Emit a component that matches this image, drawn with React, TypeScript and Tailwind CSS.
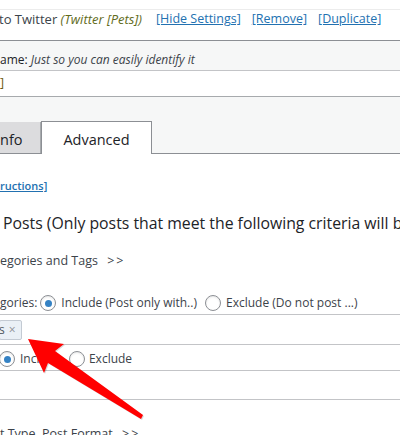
import React from "react";

function Radio({ checked = false, className = "" }: { checked?: boolean; className?: string }) {
  return (
    <span
      className={
        "flex h-4 w-4 shrink-0 items-center justify-center rounded-full border border-[#8c8f94] bg-white shadow-[inset_0_1px_2px_rgba(0,0,0,0.1)] " +
        className
      }
    >
      {checked ? <span className="h-[7px] w-[7px] rounded-full bg-[#3582c4]" /> : null}
    </span>
  );
}

function Arrow() {
  return (
    <svg
      className="pointer-events-none absolute left-0 top-0"
      width="400"
      height="435"
      viewBox="0 0 400 435"
    >
      <polygon
        points="28,339 64,344 55,351 143,415 141,419 48,363 44,373"
        fill="#000"
        opacity="0.15"
        transform="translate(1,1)"
      />
      <polygon points="28,339 64,344 55,351 143,415 141,419 48,363 44,373" fill="#ff0000" />
    </svg>
  );
}

export default function App() {
  return (
    <div className="relative h-[435px] w-[400px] overflow-hidden bg-white font-['Open_Sans',sans-serif] text-[#3c434a]">
      <div className="h-[10px] border-b border-[#ececec]" />

      {/* title row */}
      <div className="flex h-[31px] items-start border-b border-[#8c8f94] text-[13px] leading-[18px]">
        <span className="-ml-[1px] whitespace-nowrap">
          to Twitter <i className="text-[#626b1c]">(Twitter [Pets])</i>
        </span>
        <a className="ml-[14px] whitespace-nowrap text-[12.5px] text-[#2271b1] underline">[Hide Settings]</a>
        <a className="ml-[11px] whitespace-nowrap text-[12.5px] text-[#2271b1] underline">[Remove]</a>
        <a className="ml-[11px] whitespace-nowrap text-[12.5px] text-[#2271b1] underline">[Duplicate]</a>
      </div>

      {/* name row */}
      <div className="h-[30px] border-b border-[#c3c4c7] bg-[#f6f7f7] pt-[10px] text-[12px] leading-[18px]">
        <span className="text-[#1d2327]">ame: </span>
        <i>Just so you can easily identify it</i>
      </div>

      {/* input row */}
      <div className="h-[26px] border-b border-[#a7aaad] pt-[3px] text-[12.5px] leading-[18px] text-[#6b5b12]">
        ]
      </div>

      {/* tabs */}
      <div className="flex h-[57px] items-end border-b border-[#8c8f94] bg-[#f6f7f7] text-[14.5px] leading-[20px]">
        <div className="h-[31px] w-[41px] border-r border-[#a7aaad] bg-[#dcdcde] pt-[8px] text-[#1d2327]">
          nfo
        </div>
        <div className="-mb-px h-[33px] w-[111px] border border-b-0 border-[#8c8f94] bg-white pt-[8px] text-center text-[#1d2327]">
          Advanced
        </div>
      </div>

      {/* content */}
      <div className="pt-[25px] text-[11px] font-semibold leading-[14px] text-[#2271b1] underline">
        ructions]
      </div>

      <h3 className="mt-[20px] whitespace-nowrap pl-[3px] text-[15.8px] leading-[20px] text-[#1d2327]">
        Posts (Only posts that meet the following criteria will be posted)
      </h3>

      <div className="mt-[19px] whitespace-nowrap text-[12.5px] leading-[18px]">
        egories and Tags <span className="ml-[6px] tracking-[2px]">&gt;&gt;</span>
      </div>

      <div className="flex h-[45px] items-center whitespace-nowrap border-b border-[#c3c4c7] pb-[2px] pt-[24px] text-[12px] leading-[18px]">
        <span>gories:</span>
        <Radio checked className="ml-[3px]" />
        <span className="ml-[5px]">Include (Post only with..)</span>
        <Radio className="ml-[8px]" />
        <span className="ml-[5px]">Exclude (Do not post ...)</span>
      </div>

      <div className="h-[30px] border-b border-[#c3c4c7] pt-[5px]">
        <div className="-ml-[1px] flex h-[20px] w-[23px] items-center rounded-[2px] border border-[#c3cad3] bg-[#eaf0f6] text-[12px] leading-[16px]">
          <span className="-ml-[1px] text-[#50575e]">s</span>
          <span className="ml-[4px] text-[#8c8f94]">×</span>
        </div>
      </div>

      <div className="flex h-[26px] items-center whitespace-nowrap border-b border-[#c3c4c7] pb-[2px] pt-[5px] text-[12px] leading-[18px]">
        <Radio checked className="-ml-[1px]" />
        <span className="ml-[5px]">Include</span>
        <Radio className="ml-[8px]" />
        <span className="ml-[4px]">Exclude</span>
      </div>

      <div className="h-[29px] border-b border-[#c3c4c7]" />

      <div className="whitespace-nowrap pt-[25px] text-[12.5px] leading-[18px]">
        t Type, Post Format <span className="ml-[6px] tracking-[2px]">&gt;&gt;</span>
      </div>

      <Arrow />
    </div>
  );
}
